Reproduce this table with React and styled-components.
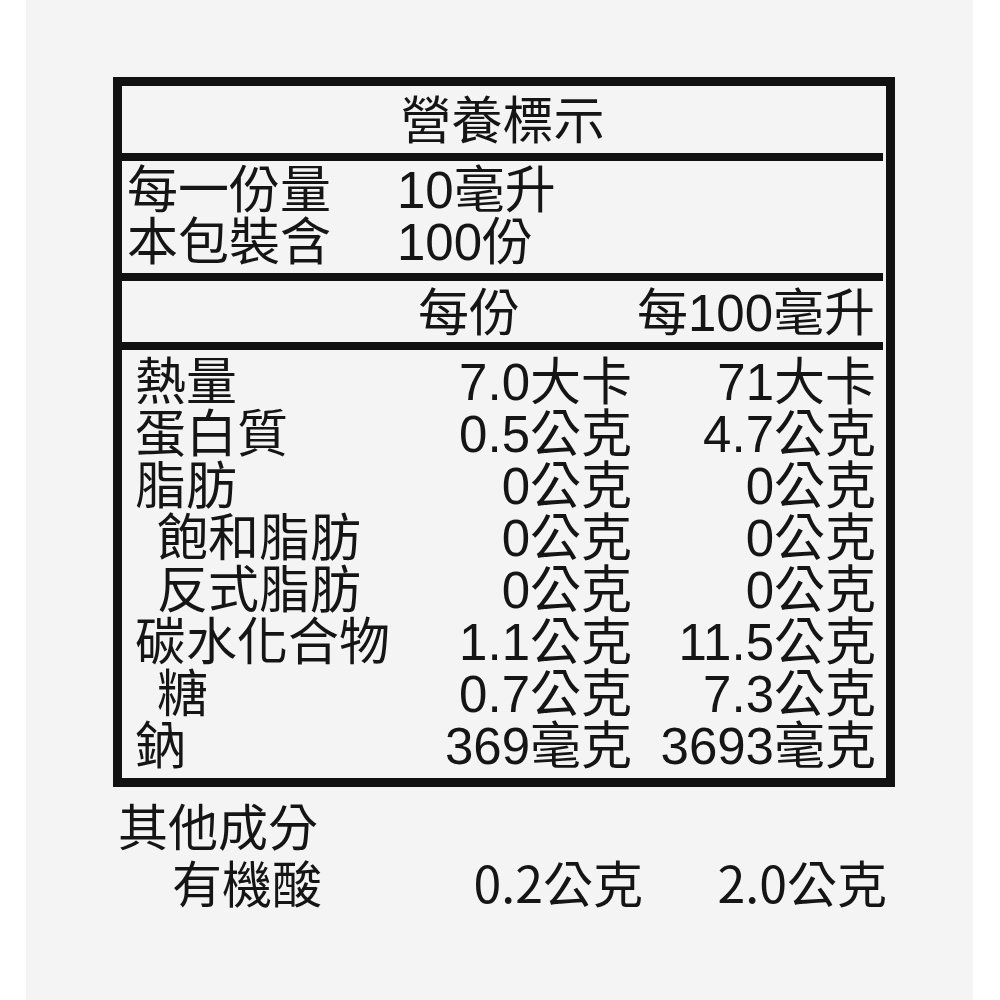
import styled, { createGlobalStyle } from 'styled-components';

const GlobalStyle = createGlobalStyle`
  body {
    margin: 0;
    background: #ffffff;
  }
`;

const Page = styled.div`
  box-sizing: border-box;
  width: 947px;
  min-height: 1000px;
  margin-left: 26px;
  padding: 77px 0 0 87px;
  background: #f4f4f4;
  color: #151515;
  font-family: "Liberation Sans", "Noto Sans CJK TC", sans-serif;
  font-size: 51px;
`;

const Label = styled.div`
  box-sizing: border-box;
  display: flex;
  flex-direction: column;
  width: 782px;
  height: 710px;
  border: 9px solid #111;
`;

const Section = styled.div`
  margin-right: 3px;
  border-bottom: 8px solid #111;
`;

const Title = styled(Section)`
  padding-top: 4px;
  line-height: 63px;
  text-align: center;
`;

const Serving = styled(Section)`
  display: grid;
  grid-template-columns: 270px 1fr;
  padding: 4px 0 4px 5px;
  line-height: 52px;
`;

const ColumnHead = styled(Section)`
  display: grid;
  grid-template-columns: 296px 1fr auto;
  padding: 7px 8px 2px 0;
  line-height: 52px;
`;

const Nutrients = styled.div`
  flex: 1;
  display: grid;
  grid-template-columns: 1fr 228px 244px;
  align-content: start;
  padding: 7px 10px 0 13px;
  line-height: 52px;
`;

const Name = styled.div`
  padding-left: ${(p) => (p.$indent ? '22px' : '0')};
  white-space: nowrap;
`;

const Amount = styled.div`
  text-align: right;
  white-space: nowrap;
`;

const Others = styled.div`
  display: grid;
  grid-template-columns: 1fr 243px 244px;
  width: 769px;
  margin: 9px 0 0 5px;
  font-family: "Noto Sans CJK TC", sans-serif;
  font-size: 50px;
  line-height: 57px;
`;

const OthersHead = styled.div`
  grid-column: 1 / -1;
`;

const OtherName = styled.div`
  padding-left: 54px;
`;

const nutrients = [
  { name: '熱量', per: '7.0大卡', per100: '71大卡' },
  { name: '蛋白質', per: '0.5公克', per100: '4.7公克' },
  { name: '脂肪', per: '0公克', per100: '0公克' },
  { name: '飽和脂肪', per: '0公克', per100: '0公克', indent: true },
  { name: '反式脂肪', per: '0公克', per100: '0公克', indent: true },
  { name: '碳水化合物', per: '1.1公克', per100: '11.5公克' },
  { name: '糖', per: '0.7公克', per100: '7.3公克', indent: true },
  { name: '鈉', per: '369毫克', per100: '3693毫克' },
];

export default function App() {
  return (
    <>
      <GlobalStyle />
      <Page>
        <Label>
          <Title>營養標示</Title>
          <Serving>
            <div>每一份量</div>
            <div>10毫升</div>
            <div>本包裝含</div>
            <div>100份</div>
          </Serving>
          <ColumnHead>
            <div />
            <div>每份</div>
            <div>每100毫升</div>
          </ColumnHead>
          <Nutrients>
            {nutrients.map((n) => [
              <Name key={`${n.name}-name`} $indent={n.indent}>{n.name}</Name>,
              <Amount key={`${n.name}-per`}>{n.per}</Amount>,
              <Amount key={`${n.name}-100`}>{n.per100}</Amount>,
            ])}
          </Nutrients>
        </Label>
        <Others>
          <OthersHead>其他成分</OthersHead>
          <OtherName>有機酸</OtherName>
          <Amount>0.2公克</Amount>
          <Amount>2.0公克</Amount>
        </Others>
      </Page>
    </>
  );
}
